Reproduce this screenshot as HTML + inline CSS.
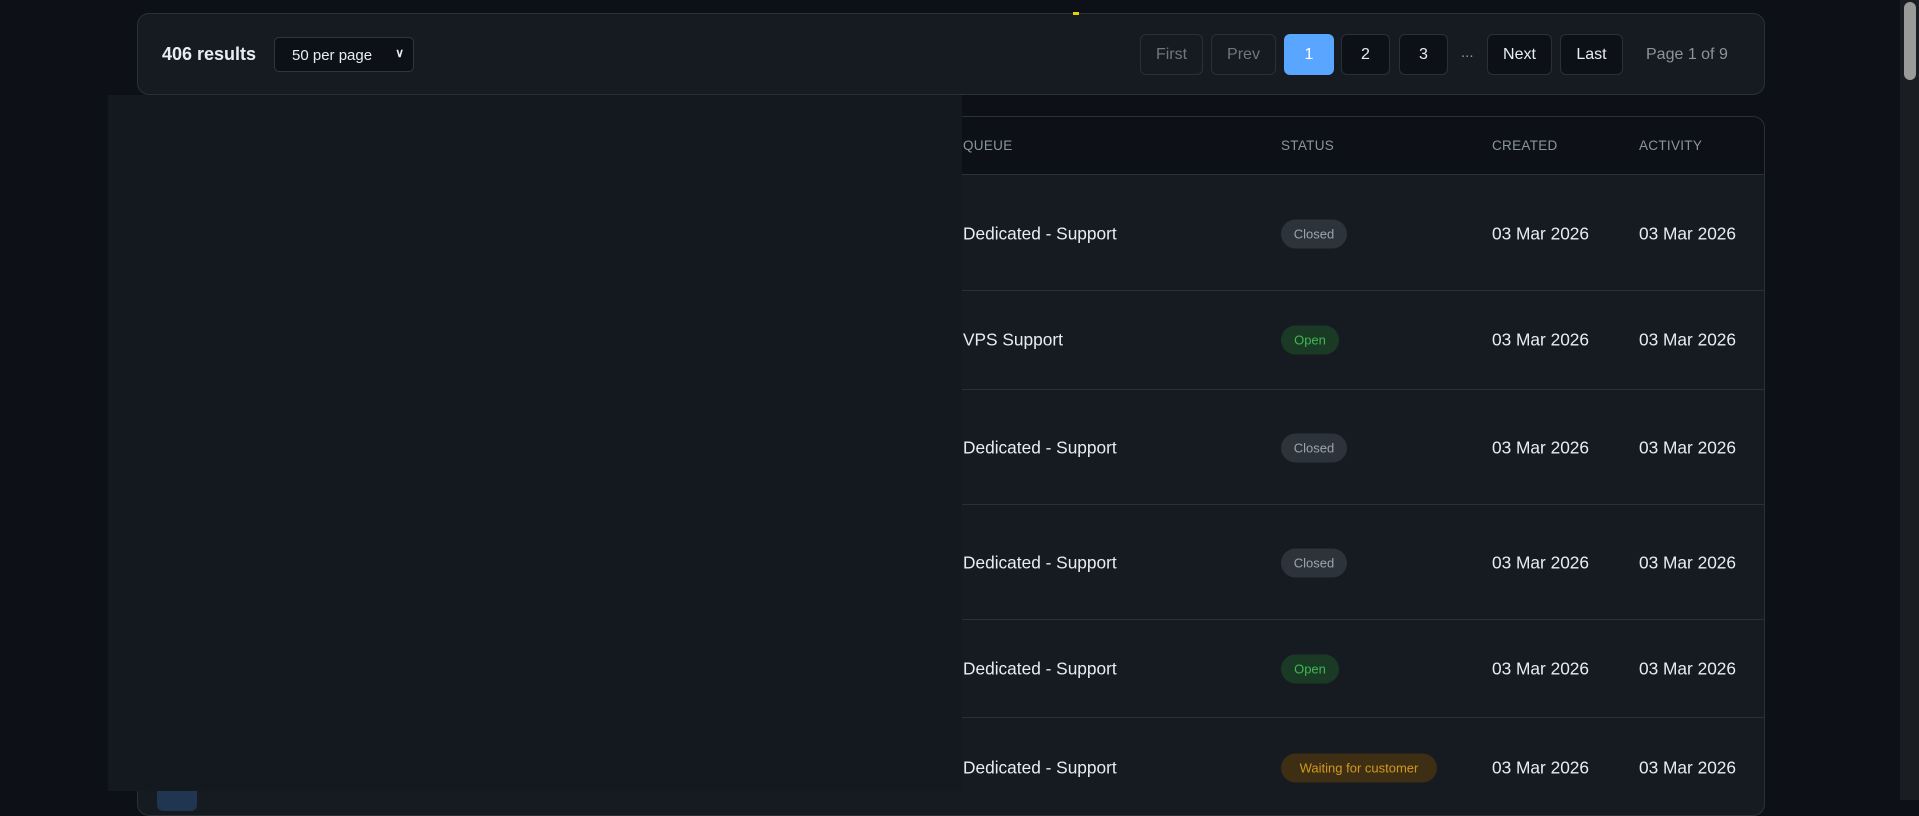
<!DOCTYPE html>
<html><head><meta charset="utf-8"><style>
*{box-sizing:border-box;margin:0;padding:0}
body{width:1919px;height:800px;overflow:hidden;background:#0d1117;font-family:"Liberation Sans",sans-serif;color:#e6edf3;position:relative}
.card{position:absolute;left:137px;width:1628px;background:#161b22;border:1px solid #2a3038;border-radius:12px}
.top{top:13px;height:82px}
.res{position:absolute;left:24px;top:30px;font-size:18px;font-weight:bold;color:#e6edf3}
.sel{position:absolute;left:136px;top:23px;width:140px;height:35px;background:#0d1117;border:1px solid #30363d;border-radius:5px;font-size:15px;padding:9px 17px;color:#e6edf3}
.sel span{position:absolute;right:9px;top:8px;font-size:12px;font-weight:bold}
.b{position:absolute;top:20px;height:41px;border:1px solid #2a3038;border-radius:6px;background:#0d1117;font-size:16px;color:#e6edf3;text-align:center;line-height:39px}
.dis{background:#161b22;color:#6e7681}
.act{background:#58a6ff;border-color:#58a6ff;color:#fff}
.tbl{top:116px;height:700px;overflow:hidden}
.th{position:absolute;left:0;right:0;top:0;height:58px;background:#0d1117;border-bottom:1px solid #2a3038}
.h{position:absolute;top:21px;font-size:13.5px;letter-spacing:.3px;color:#8b949e}
.row{position:absolute;left:0;right:0;border-bottom:1px solid #2a3038}
.c{position:absolute;font-size:17.3px;color:#e6edf3;transform:translateY(-50%)}
.bd{position:absolute;height:29px;border-radius:15px;font-size:13px;line-height:29px;text-align:center;transform:translateY(-50%)}
.cl{background:#2d333b;color:#9aa4af;width:66px}
.op{background:#1b3a26;color:#3fb950;width:58px}
.wt{background:#3d2e14;color:#d29922;width:156px}
.ov{position:absolute;left:108px;top:95px;width:854px;height:696px;background:#14181f}
.sb{position:absolute;right:0;top:0;width:19px;height:800px;background:#1a1d22}
.th2{position:absolute;right:3px;top:2px;width:12px;height:78px;background:#9a9a9a;border-radius:6px}
</style></head><body>
<div class="card top">
<div class="res">406 results</div>
<div class="sel">50 per page<span>&#8744;</span></div>
<div class="b dis" style="left:1002px;width:63px">First</div>
<div class="b dis" style="left:1073px;width:65px">Prev</div>
<div class="b act" style="left:1146px;width:50px">1</div>
<div class="b" style="left:1203px;width:49px">2</div>
<div class="b" style="left:1261px;width:49px">3</div>
<div style="position:absolute;left:1323px;top:30px;color:#8b949e;font-size:15px">...</div>
<div class="b" style="left:1349px;width:65px">Next</div>
<div class="b" style="left:1422px;width:63px">Last</div>
<div style="position:absolute;left:1508px;top:32px;color:#8b949e;font-size:16px">Page 1 of 9</div>
</div>
<div style="position:absolute;left:1073px;top:12px;width:6px;height:3px;background:#e6d000"></div>
<div class="card tbl">
<div class="th">
<div class="h" style="left:825px">QUEUE</div>
<div class="h" style="left:1143px">STATUS</div>
<div class="h" style="left:1354px">CREATED</div>
<div class="h" style="left:1501px">ACTIVITY</div>
</div>
<div class="row" style="top:58px;height:116px"></div>
<div class="row" style="top:174px;height:99px"></div>
<div class="row" style="top:273px;height:115px"></div>
<div class="row" style="top:388px;height:115px"></div>
<div class="row" style="top:503px;height:98px"></div>
<div class="c" style="left:825px;top:117px">Dedicated - Support</div><div class="bd cl" style="left:1143px;top:117px">Closed</div><div class="c" style="left:1354px;top:117px">03 Mar 2026</div><div class="c" style="left:1501px;top:117px">03 Mar 2026</div>
<div class="c" style="left:825px;top:223px">VPS Support</div><div class="bd op" style="left:1143px;top:223px">Open</div><div class="c" style="left:1354px;top:223px">03 Mar 2026</div><div class="c" style="left:1501px;top:223px">03 Mar 2026</div>
<div class="c" style="left:825px;top:331px">Dedicated - Support</div><div class="bd cl" style="left:1143px;top:331px">Closed</div><div class="c" style="left:1354px;top:331px">03 Mar 2026</div><div class="c" style="left:1501px;top:331px">03 Mar 2026</div>
<div class="c" style="left:825px;top:446px">Dedicated - Support</div><div class="bd cl" style="left:1143px;top:446px">Closed</div><div class="c" style="left:1354px;top:446px">03 Mar 2026</div><div class="c" style="left:1501px;top:446px">03 Mar 2026</div>
<div class="c" style="left:825px;top:552px">Dedicated - Support</div><div class="bd op" style="left:1143px;top:552px">Open</div><div class="c" style="left:1354px;top:552px">03 Mar 2026</div><div class="c" style="left:1501px;top:552px">03 Mar 2026</div>
<div class="c" style="left:825px;top:651px">Dedicated - Support</div><div class="bd wt" style="left:1143px;top:651px">Waiting for customer</div><div class="c" style="left:1354px;top:651px">03 Mar 2026</div><div class="c" style="left:1501px;top:651px">03 Mar 2026</div>
<div style="position:absolute;left:19px;top:664px;width:40px;height:30px;background:#1f3550;border-radius:6px"></div>
</div>
<div class="ov"></div>
<div class="sb"><div class="th2"></div></div>
</body></html>
